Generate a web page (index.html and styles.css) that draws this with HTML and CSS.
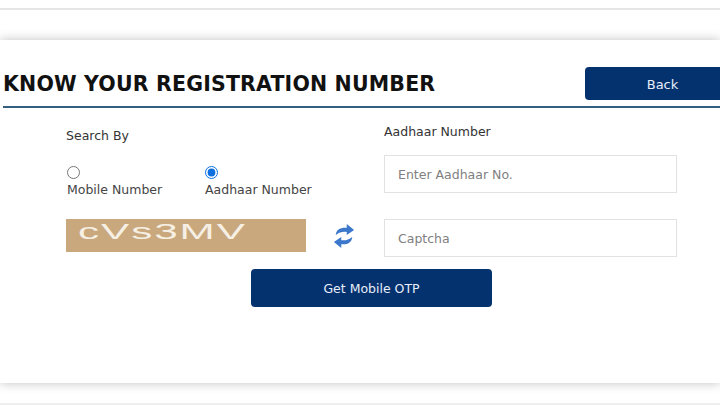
FILE: index.html
```html
<!DOCTYPE html>
<html lang="en">
<head>
    <meta charset="UTF-8">
    <meta name="viewport" content="width=device-width, initial-scale=1.0">
    <title>Know Your Registration Number</title>
    <link rel="stylesheet" href="styles.css">
</head>
<body>
    <div class="top-strip"></div>

    <div class="card">
        <div class="card-header">
            <h1>KNOW YOUR REGISTRATION NUMBER</h1>
            <button class="btn back-btn">Back</button>
        </div>

        <div class="form">
            <div class="left-col">
                <div class="search-label">Search By</div>
                <div class="radios">
                    <label class="radio-item mobile-item">
                        <input type="radio" name="searchBy">
                        <span>Mobile Number</span>
                    </label>
                    <label class="radio-item">
                        <input type="radio" name="searchBy" checked>
                        <span>Aadhaar Number</span>
                    </label>
                </div>
                <div class="captcha-row">
                    <div class="captcha-img"><span class="captcha-text">cVs3MV</span></div>
                    <svg class="refresh" viewBox="0 0 24 28" width="22" height="26">
                        <path d="M3 13 C3.500 7 8 4.500 15 5 L15 1 L23 7.500 L15 13 L15 9.500 C10 9 7 10 3 13 Z"/>
                        <path d="M21 15 C20.500 21 16 23.500 9 23 L9 27 L1 20.500 L9 15 L9 18.500 C14 19 17 18 21 15 Z"/>
                    </svg>
                </div>
            </div>

            <div class="right-col">
                <label class="field-label" for="aadhaar">Aadhaar Number</label>
                <input class="text-input" type="text" id="aadhaar" placeholder="Enter Aadhaar No.">
                <input class="text-input captcha-input" type="text" placeholder="Captcha">
            </div>
        </div>

        <div class="submit-row">
            <button class="btn otp-btn">Get Mobile OTP</button>
        </div>
    </div>

    <div class="bottom-strip"></div>
</body>
</html>
```

FILE: styles.css
```css
body {
    font-family: "DejaVu Sans", Verdana, sans-serif;
    margin: 0;
    height: 405px;
    overflow: hidden;
    background-color: #fff;
    color: #333;
}
.top-strip {
    height: 8px;
    border-bottom: 2px solid #e6e6e6;
    margin-bottom: 30px;
}
.card {
    height: 343px;
    background-color: #fff;
    box-shadow: 0 0 10px rgba(0, 0, 0, 0.25);
}
.card-header {
    display: flex;
    justify-content: space-between;
    align-items: flex-start;
    height: 68px;
    margin-left: 3px;
    padding-top: 27px;
    box-sizing: border-box;
    border-bottom: 2px solid #33607f;
}
h1 {
    font-size: 20.5px;
    line-height: 35px;
    font-weight: bold;
    margin: 0;
    color: #111;
    letter-spacing: 0.17px;
}
.btn {
    font-family: "DejaVu Sans", Verdana, sans-serif;
    background-color: #04326f;
    color: #e8eefa;
    border: none;
    border-radius: 4px;
    cursor: pointer;
}
.back-btn {
    width: 135px;
    height: 33px;
    padding: 2px 0 0 20px;
    font-size: 13px;
    border-radius: 4px 0 0 4px;
}
.form {
    display: flex;
    padding-left: 66px;
}
.left-col {
    width: 318px;
}
.search-label {
    font-size: 12.500px;
    margin-top: 20px;
    line-height: 16px;
}
.radios {
    display: flex;
    margin-top: 22px;
}
.radio-item {
    display: flex;
    flex-direction: column;
    align-items: flex-start;
    font-size: 12.500px;
    line-height: 16px;
    color: #444;
}
.radio-item span {
    margin-left: 1px;
}
.mobile-item {
    width: 138px;
}
.radio-item input {
    width: 13px;
    height: 13px;
    margin: 0 0 3px 1px;
    accent-color: #0b6fe0;
}
.captcha-row {
    display: flex;
    align-items: center;
    margin-top: 21px;
}
.captcha-img {
    width: 240px;
    height: 33px;
    background-color: #c9a87e;
    overflow: hidden;
}
.captcha-text {
    display: inline-block;
    font-family: "Liberation Sans", Arial, sans-serif;
    font-size: 22px;
    line-height: 26px;
    color: #f6efe4;
    letter-spacing: 1px;
    margin-left: 12px;
    transform: scaleX(1.92);
    transform-origin: left;
}
.refresh {
    fill: #3b78cc;
    margin-left: 27px;
}
.right-col {
    display: flex;
    flex-direction: column;
    width: 293px;
}
.field-label {
    font-size: 12.500px;
    line-height: 16px;
    margin-top: 16px;
    margin-bottom: 15px;
}
.text-input {
    font-family: "DejaVu Sans", Verdana, sans-serif;
    font-size: 12.500px;
    height: 38px;
    box-sizing: border-box;
    border: 1px solid #e2e2e2;
    padding: 0 13px;
    color: #333;
    outline: none;
}
.text-input::placeholder {
    color: #808080;
}
.captcha-input {
    margin-top: 26px;
}
.submit-row {
    padding-left: 251px;
    margin-top: 12px;
}
.otp-btn {
    width: 241px;
    height: 38px;
    font-size: 12.500px;
    font-weight: 500;
}
.bottom-strip {
    margin-top: 20px;
    height: 2px;
    background-color: #efefef;
}
```
